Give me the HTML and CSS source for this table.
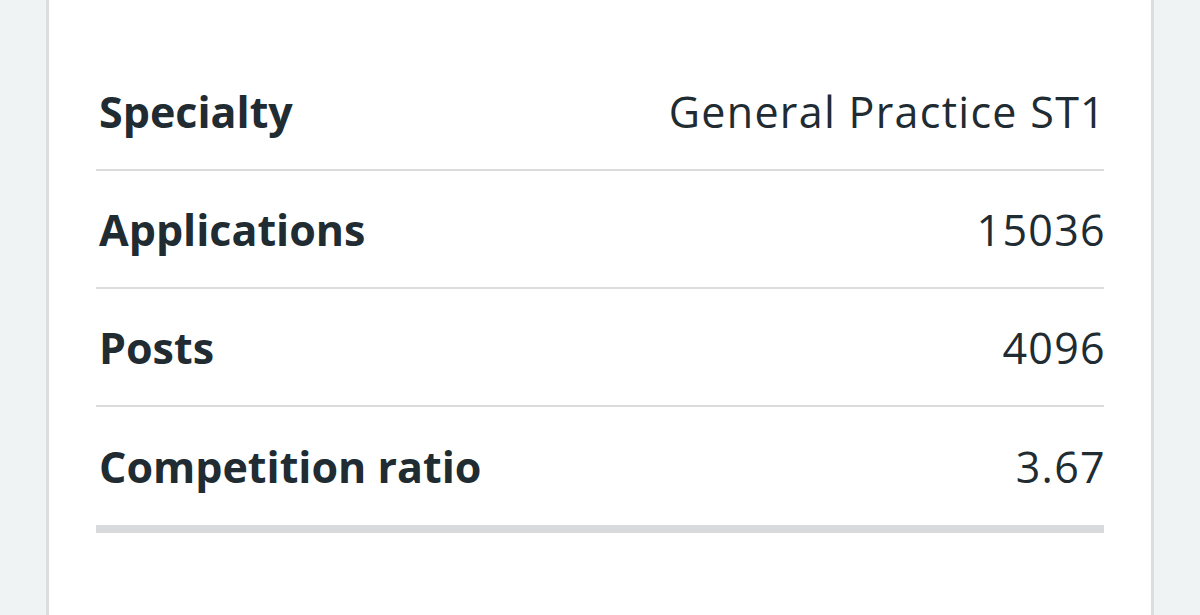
FILE: index.html
```html
<!DOCTYPE html>
<html lang="en">
<head>
<meta charset="utf-8">
<link rel="stylesheet" href="styles.css">
</head>
<body>
<div class="card">
  <dl class="summary">
    <div class="row">
      <dt class="key">Specialty</dt>
      <dd class="value">General Practice ST1</dd>
    </div>
    <div class="row">
      <dt class="key">Applications</dt>
      <dd class="value">15036</dd>
    </div>
    <div class="row">
      <dt class="key">Posts</dt>
      <dd class="value">4096</dd>
    </div>
    <div class="row last">
      <dt class="key">Competition ratio</dt>
      <dd class="value">3.67</dd>
    </div>
  </dl>
</div>
</body>
</html>
```
FILE: styles.css
```css
html, body {
  margin: 0;
  padding: 0;
}
body {
  background: #eff3f4;
  height: 615px;
  overflow: hidden;
  font-family: "Open Sans", "Noto Sans", sans-serif;
  color: #212b32;
}
.card {
  margin: 0 46px;
  height: 615px;
  background: #ffffff;
  border-left: 3px solid #dadedf;
  border-right: 3px solid #dadedf;
  padding: 53px 47px 0;
  box-sizing: border-box;
}
.summary {
  margin: 0;
}
.row {
  display: flex;
  justify-content: space-between;
  align-items: center;
  height: 116px;
  border-bottom: 2px solid #dcdcdc;
}
.row.last {
  height: 118px;
  border-bottom: 8px solid #d8dadc;
}
.key {
  margin: 0 0 0 3px;
  font-weight: 700;
  font-size: 43px;
}
.value {
  margin: 0 -2px 0 0;
  font-size: 43px;
  font-weight: 400;
  letter-spacing: 1.3px;
}
```
